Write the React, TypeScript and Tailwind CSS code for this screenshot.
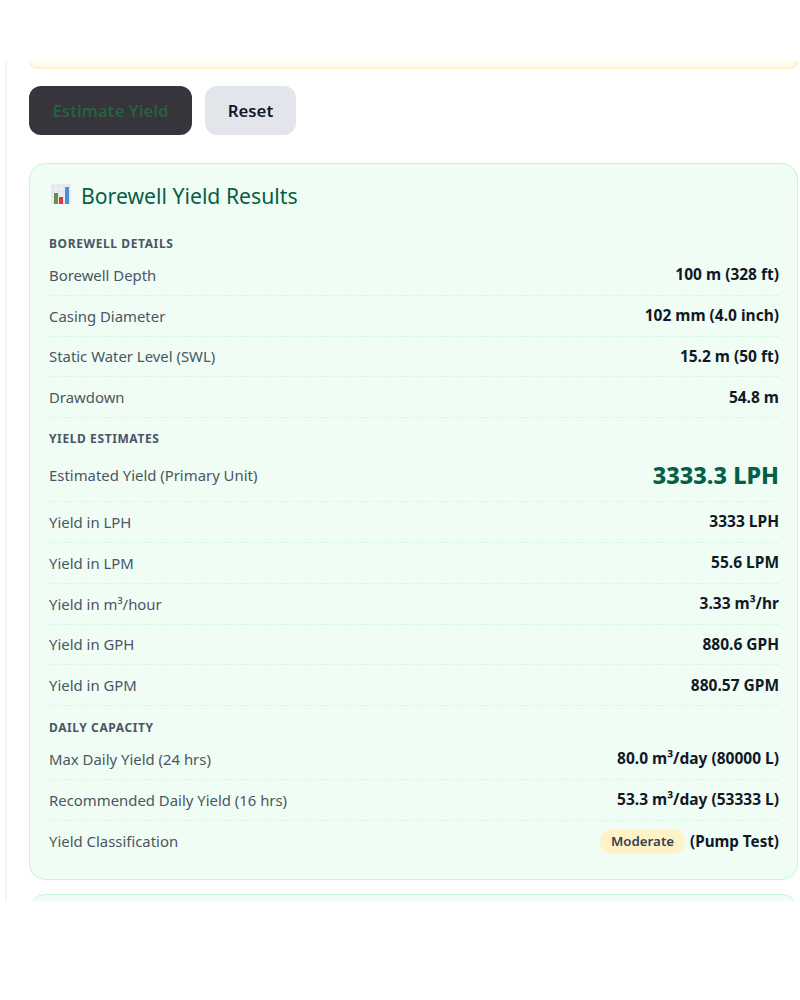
const F = "font-['Noto_Sans',sans-serif]";

function Row({ label, children, big }: { label: string; children: React.ReactNode; big?: boolean }) {
  return (
    <div className={`flex items-center justify-between border-b border-dashed border-[#d1fae5] ${big ? "h-[53px]" : "h-[40.8px]"}`}>
      <span className="text-[14.9px] text-[#4b5563]">{label}</span>
      <span className="flex items-center text-[15.5px] font-bold text-[#111827]">{children}</span>
    </div>
  );
}

function Section({ title }: { title: string }) {
  return <div className="text-[12px] leading-[16px] font-bold uppercase tracking-[0.6px] text-[#4b5563]">{title}</div>;
}

function ChartIcon() {
  return (
    <svg width="20" height="20" viewBox="0 0 20 20" className="shrink-0 ml-[2px] mb-[4px]">
      <rect width="20" height="20" fill="#e5e7eb" />
      <path d="M0 5h20M0 10h20M0 15h20M5 0v20M10 0v20M15 0v20" stroke="#f3f4f6" strokeWidth="1" />
      <rect x="3" y="9" width="4" height="11" fill="#6b8e4e" />
      <rect x="8" y="13" width="4" height="7" fill="#e0383e" />
      <rect x="14" y="3" width="4" height="17" fill="#4a90d9" />
    </svg>
  );
}

export default function App() {
  return (
    <div className={`bg-white h-[1000px] pt-[61px] ${F}`}>
      <div className="h-[840px] overflow-hidden ml-[5px] border-l-2 border-[#f3f4f6] pl-[22px] pr-[2px]">
        <div className="h-[8px] bg-[#fffbeb] border-2 border-t-0 border-[#fef3c7] rounded-b-[12px]" />
        <div className="flex gap-[13px] mt-[17px]">
          <button className="w-[163px] h-[49px] rounded-[12px] bg-[#35353b] text-[16.8px] font-semibold text-[#2a5f3f]">Estimate Yield</button>
          <button className="w-[91px] h-[49px] rounded-[12px] bg-[#e2e6eb] text-[16.8px] font-semibold text-[#111827]">Reset</button>
        </div>
        <div className="mt-[28px] h-[717px] bg-[#f0fdf4] border border-[#c6f6d5] rounded-[16px] pl-[19px] pr-[18px] pt-[18px]">
          <div className="flex items-center gap-[10px] h-[28px]">
            <ChartIcon />
            <span className="text-[21.2px] text-[#065f46]">Borewell Yield Results</span>
          </div>
          <div className="mt-[26px]"><Section title="Borewell Details" /></div>
          <div className="mt-[3px]">
            <Row label="Borewell Depth">100 m (328 ft)</Row>
            <Row label="Casing Diameter">102 mm (4.0 inch)</Row>
            <Row label="Static Water Level (SWL)">15.2 m (50 ft)</Row>
            <Row label="Drawdown">54.8 m</Row>
          </div>
          <div className="mt-[13px]"><Section title="Yield Estimates" /></div>
          <div className="mt-[2px]">
            <Row label="Estimated Yield (Primary Unit)" big><span className="text-[23.4px] font-extrabold text-[#065f46]">3333.3 LPH</span></Row>
            <Row label="Yield in LPH">3333 LPH</Row>
            <Row label="Yield in LPM">55.6 LPM</Row>
            <Row label="Yield in m³/hour">3.33 m³/hr</Row>
            <Row label="Yield in GPH">880.6 GPH</Row>
            <Row label="Yield in GPM">880.57 GPM</Row>
          </div>
          <div className="mt-[14px]"><Section title="Daily Capacity" /></div>
          <div className="mt-[3px]">
            <Row label="Max Daily Yield (24 hrs)">80.0 m³/day (80000 L)</Row>
            <Row label="Recommended Daily Yield (16 hrs)">53.3 m³/day (53333 L)</Row>
            <div className="flex items-center justify-between h-[40.8px]">
              <span className="text-[14.9px] text-[#4b5563]">Yield Classification</span>
              <span className="flex items-center gap-[5px] text-[15.2px] font-bold text-[#111827]">
                <span className="h-[25px] px-[11px] rounded-full bg-[#fef3c7] text-[13.3px] font-semibold leading-[25px] text-[#374151]">Moderate</span>
                (Pump Test)
              </span>
            </div>
          </div>
        </div>
        <div className="mt-[14px] h-[40px] bg-[#f0fdf4] border border-[#c6f6d5] rounded-[16px]" />
      </div>
    </div>
  );
}
